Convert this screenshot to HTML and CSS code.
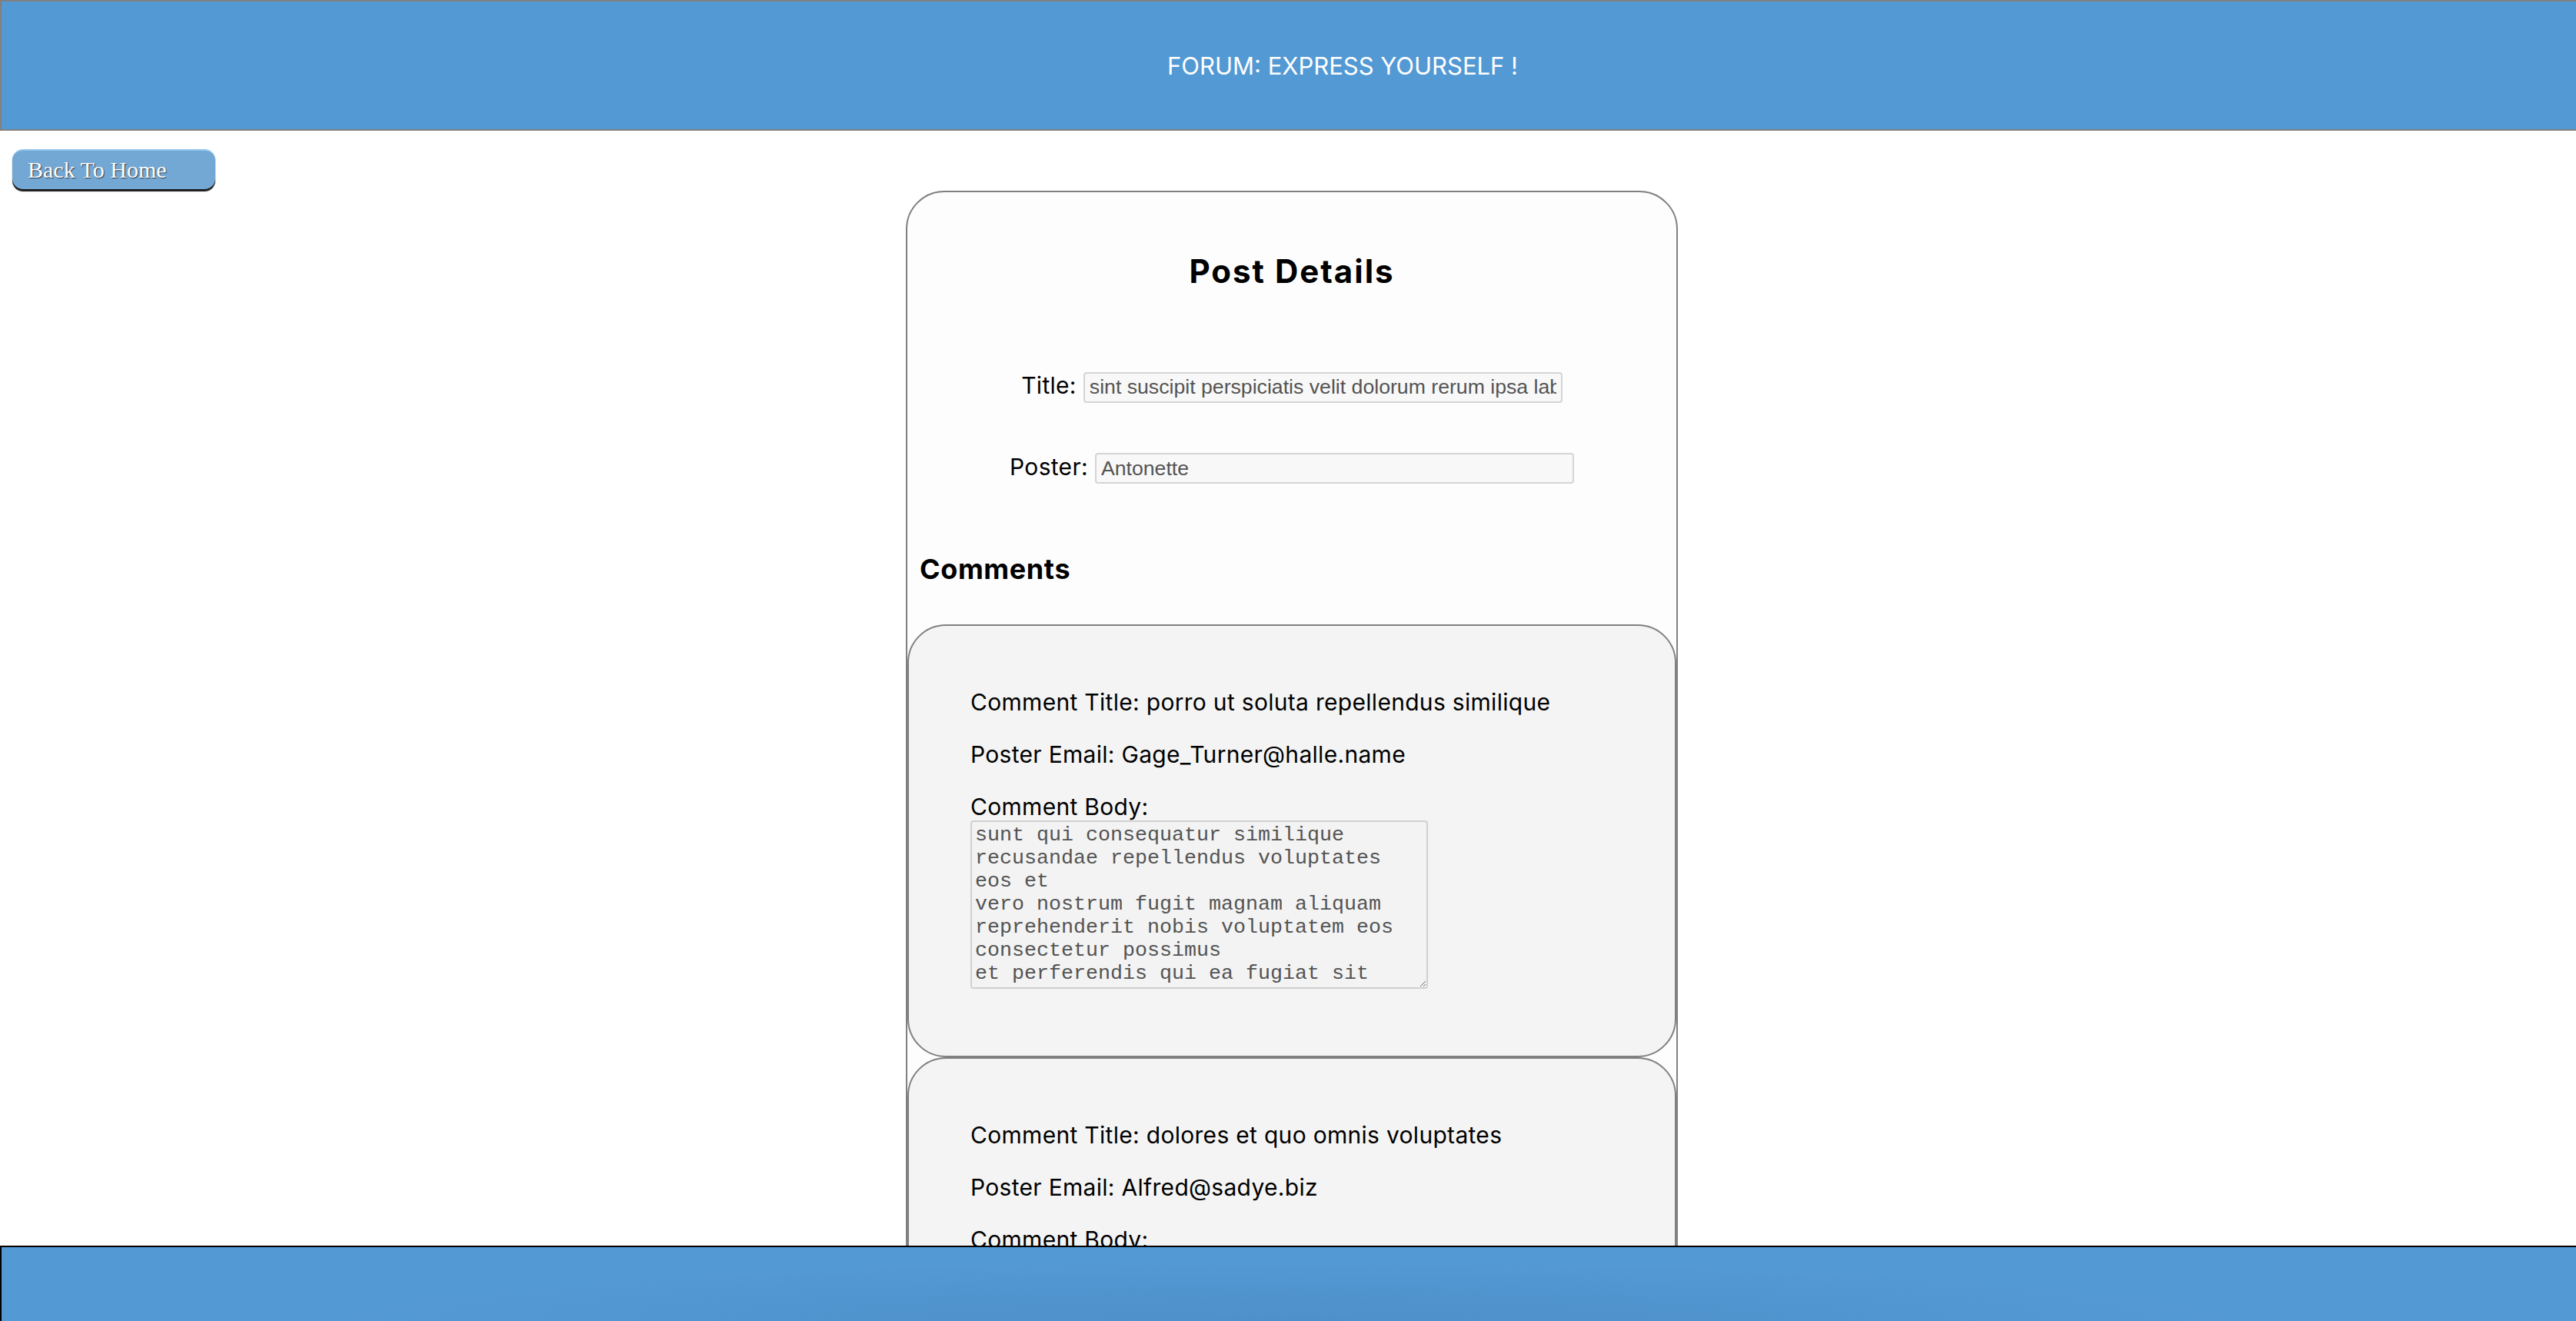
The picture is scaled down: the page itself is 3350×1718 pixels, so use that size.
FILE: index.html
```html
<!DOCTYPE html>
<html lang="en">
<head>
<meta charset="utf-8">
<title>Forum - Post Details</title>
<link rel="stylesheet" href="styles.css">
</head>
<body>
<header class="topbar"><span>FORUM: EXPRESS YOURSELF !</span></header>

<button class="home-btn" type="button">Back To Home</button>

<main class="post">
  <h2 class="post-title">Post Details</h2>
  <div class="fields">
    <div class="field">
      <label for="title">Title:</label>
      <input id="title" type="text" value="sint suscipit perspiciatis velit dolorum rerum ipsa laboriosam odio" disabled>
    </div>
    <div class="field">
      <label for="poster">Poster:</label>
      <input id="poster" type="text" value="Antonette" disabled>
    </div>
  </div>

  <h3 class="comments-title">Comments</h3>

  <section class="comment">
    <p>Comment Title: porro ut soluta repellendus similique</p>
    <p>Poster Email: Gage_Turner@halle.name</p>
    <p class="body-label">Comment Body:</p>
    <textarea disabled>sunt qui consequatur similique recusandae repellendus voluptates eos et
vero nostrum fugit magnam aliquam
reprehenderit nobis voluptatem eos consectetur possimus
et perferendis qui ea fugiat sit doloremque</textarea>
  </section>

  <section class="comment">
    <p>Comment Title: dolores et quo omnis voluptates</p>
    <p>Poster Email: Alfred@sadye.biz</p>
    <p class="body-label">Comment Body:</p>
    <textarea disabled>eos ullam veritatis est quia
et dolorum officiis ipsum voluptatem quod
saepe est numquam occaecati
quaerat dolor repudiandae illum</textarea>
  </section>
</main>

<footer class="bottombar"></footer>
</body>
</html>
```

FILE: styles.css
```css
html {
  overflow-x: hidden;
}

body {
  margin: 0;
  background: #ffffff;
  font-family: Inter, "Noto Sans", sans-serif;
  color: #000;
  overflow-x: hidden;
}

.topbar {
  box-sizing: border-box;
  width: 3490px;
  height: 170px;
  border: 2px solid #808080;
  border-right: none;
  background: #5399d4;
  display: flex;
  align-items: center;
  justify-content: center;
  color: #ffffff;
  font-family: Inter, "Noto Sans", sans-serif;
  font-weight: 400;
  font-size: 31px;
}

.home-btn {
  display: block;
  box-sizing: border-box;
  width: 264px;
  height: 52px;
  margin: 24px 0 0 16px;
  padding: 0 0 0 20px;
  text-align: left;
  background: #74a8d4;
  border: none;
  border-top: 2px solid #93c6ef;
  border-radius: 14px;
  box-shadow: 0 3px 1px rgba(0, 0, 0, 0.9);
  color: #ffffff;
  font-family: "Liberation Serif", "Times New Roman", serif;
  font-size: 30px;
  text-shadow: 1px 1px 1px #2b3a48;
  cursor: pointer;
}

.post {
  box-sizing: border-box;
  width: 1004px;
  margin: 2px 0 0 calc(50% - 497px);
  border: 2px solid #808080;
  border-radius: 50px;
  background: #fdfdfd;
  padding-bottom: 40px;
}

.post-title {
  margin: 80px 0 0;
  text-align: center;
  font-size: 42px;
  line-height: 45px;
  letter-spacing: 2px;
  font-weight: 700;
}

.fields {
  margin-top: 108px;
  display: flex;
  flex-direction: column;
  gap: 65px;
}

.field {
  display: flex;
  justify-content: center;
  align-items: baseline;
  gap: 9px;
  font-size: 30px;
  line-height: 36px;
  letter-spacing: 0.3px;
}

.field input {
  box-sizing: border-box;
  width: 623px;
  height: 40px;
  padding: 0 6px;
  border: 2px solid #d5d5d5;
  border-radius: 4px;
  background: #f8f8f8;
  color: #545454;
  font-family: "Liberation Sans", Arial, sans-serif;
  font-size: 26.67px;
  letter-spacing: 0;
}

.comments-title {
  margin: 90px 0 51px 16px;
  font-size: 36px;
  line-height: 42px;
  letter-spacing: 0.6px;
  font-weight: 700;
}

.comment {
  box-sizing: border-box;
  border: 2px solid #808080;
  border-radius: 50px;
  background: #f4f4f4;
  padding: 81px 80px 87px;
  display: flex;
  flex-direction: column;
  align-items: flex-start;
  gap: 32px;
}

.comment p {
  margin: 0;
  font-size: 30px;
  line-height: 36px;
  letter-spacing: 0.3px;
}

.comment .body-label {
  margin-bottom: -32px;
}

.comment textarea {
  display: block;
  box-sizing: border-box;
  width: 595px;
  height: 219px;
  margin: 0;
  padding: 2px 4px;
  border: 2px solid #d0d0d0;
  border-radius: 4px;
  background: #f3f3f3;
  color: #545454;
  font-family: "Liberation Mono", "Courier New", monospace;
  font-size: 26.67px;
  line-height: 30px;
  overflow: hidden;
  resize: both;
}

.bottombar {
  position: fixed;
  left: 0;
  right: -200px;
  bottom: 0;
  height: 98px;
  box-sizing: border-box;
  border-top: 2px solid #000;
  border-left: 2px solid #000;
  background:
    radial-gradient(ellipse 1250px 80px at 1675px 100%, rgba(40, 80, 130, 0.12), rgba(40, 80, 130, 0) 100%),
    #5399d4;
}
```
